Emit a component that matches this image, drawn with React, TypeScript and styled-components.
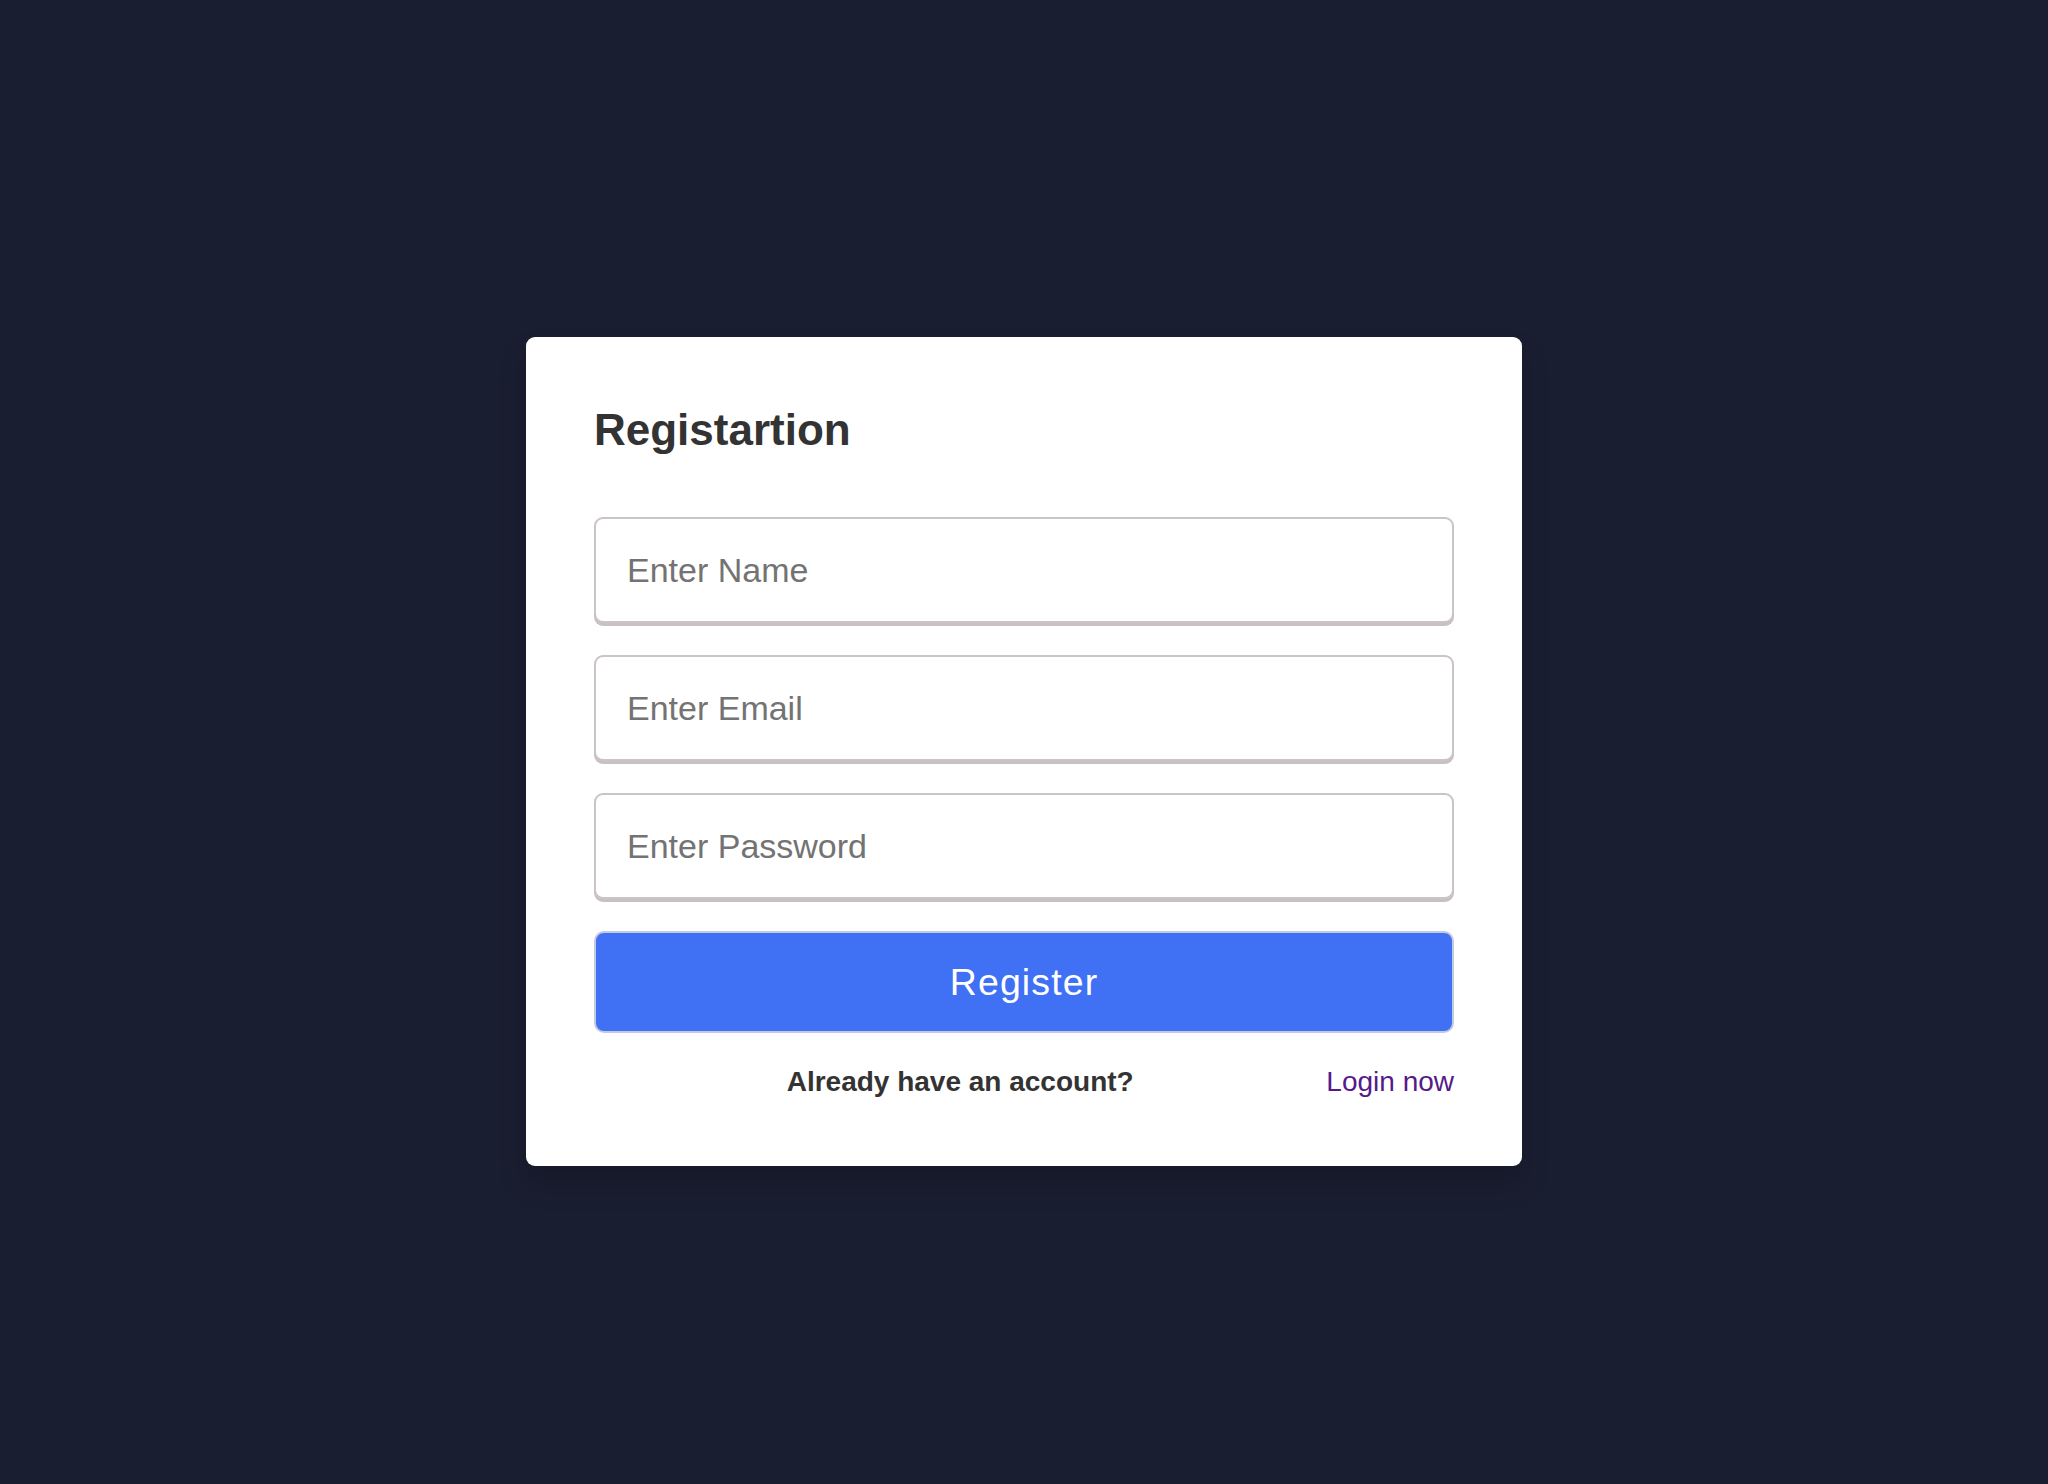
import React from "react";
import styled, { createGlobalStyle } from "styled-components";

const GlobalStyle = createGlobalStyle`
  html, body {
    margin: 0;
    padding: 0;
    background: #1a1e31;
    font-family: "Liberation Sans", Arial, sans-serif;
  }
  * { box-sizing: border-box; }
`;

const Page = styled.div`
  min-height: 100vh;
  padding-top: 19px;
  display: flex;
  align-items: center;
  justify-content: center;
  background: #1a1e31;
`;

const Card = styled.div`
  width: 996px;
  padding: 68px;
  background: #ffffff;
  border-radius: 9px;
  box-shadow: 0 18px 28px rgba(0, 0, 0, 0.18);
  display: flex;
  flex-direction: column;
`;

const Title = styled.h1`
  margin: -1px 0 61px;
  font-size: 44px;
  line-height: 52px;
  font-weight: 700;
  color: #333333;
`;

const Form = styled.form`
  display: flex;
  flex-direction: column;
  gap: 32px;
`;

const Input = styled.input`
  height: 106px;
  width: 100%;
  padding: 0 31px;
  border: 2px solid #cbc4c4;
  border-radius: 9px;
  box-shadow: 0 3px 0 #c9c1c1;
  font-family: "Liberation Sans", Arial, sans-serif;
  font-size: 34px;
  color: #333;
  outline: none;
  background: #fff;

  &::placeholder {
    color: #737373;
  }
`;

const Button = styled.button`
  height: 102px;
  width: 100%;
  border: 2px solid #c3c9e2;
  border-radius: 10px;
  background: #4070f4;
  color: #ffffff;
  font-family: "Liberation Sans", Arial, sans-serif;
  font-size: 37.5px;
  letter-spacing: 1.1px;
  cursor: pointer;
`;

const Footer = styled.div`
  margin-top: 33px;
  display: flex;
  align-items: center;
  font-size: 28px;
  line-height: 32px;
`;

const Question = styled.span`
  flex: 1;
  text-align: center;
  font-weight: 700;
  color: #333333;
`;

const LoginLink = styled.a`
  color: #551a8b;
  text-decoration: none;
`;

export default function App() {
  return (
    <>
      <GlobalStyle />
      <Page>
        <Card>
          <Title>Registartion</Title>
          <Form onSubmit={(e) => e.preventDefault()}>
            <Input type="text" placeholder="Enter Name" />
            <Input type="email" placeholder="Enter Email" />
            <Input type="password" placeholder="Enter Password" />
            <Button type="submit">Register</Button>
          </Form>
          <Footer>
            <Question>Already have an account?</Question>
            <LoginLink href="#">Login now</LoginLink>
          </Footer>
        </Card>
      </Page>
    </>
  );
}
